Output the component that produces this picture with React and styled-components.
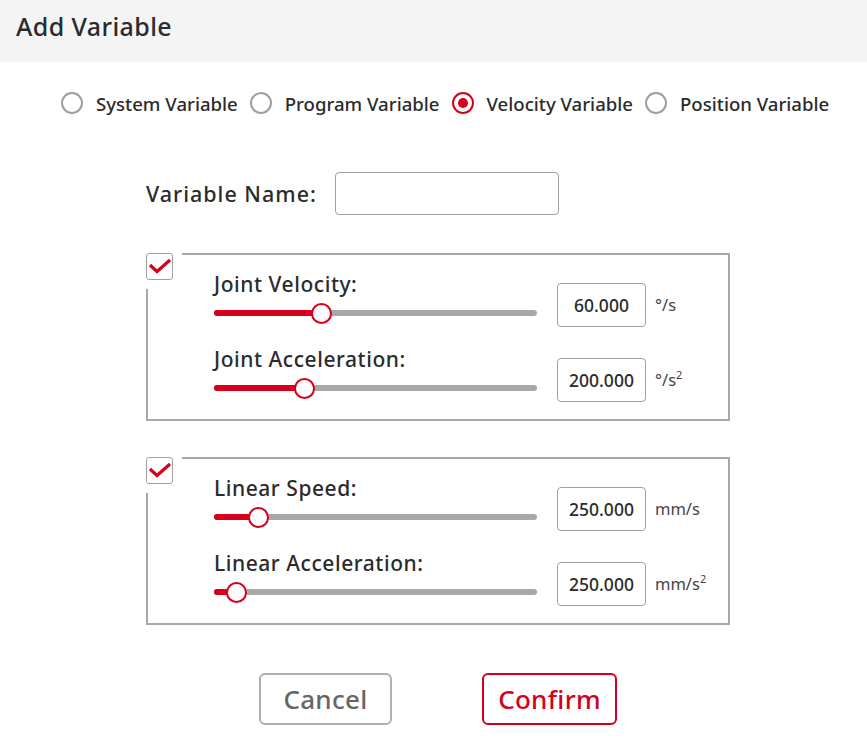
import React from "react";
import styled, { createGlobalStyle } from "styled-components";

const RED = "#d6001c";
const GRAY = "#a8a8a8";

const Global = createGlobalStyle`
  html, body { margin: 0; padding: 0; background: #fff; }
  body { font-family: "Noto Sans", "Open Sans", sans-serif; color: #2b2b2b; font-weight: 500; }
  * { box-sizing: border-box; }
`;

const Page = styled.div`
  width: 867px;
  height: 751px;
  background: #fff;
  overflow: hidden;
`;

const Header = styled.div`
  height: 62px;
  background: #f4f4f4;
  display: flex;
  align-items: flex-start;
  padding: 8px 0 0 16px;
  font-size: 25px;
  line-height: 36px;
  letter-spacing: 0.4px;
  color: #2b2b2b;
`;

const RadioRow = styled.div`
  display: flex;
  align-items: center;
  padding-left: 61px;
  margin-top: 29px;
  height: 24px;
`;

const RadioItem = styled.label`
  display: flex;
  align-items: center;
  gap: 13px;
  margin-right: 12px;
  font-size: 18.6px;
  letter-spacing: 0;
  color: #2b2b2b;
  white-space: nowrap;
`;

const RadioCircle = styled.span`
  width: 22px;
  height: 22px;
  border-radius: 50%;
  border: 2px solid ${(p) => (p.$on ? RED : "#9e9e9e")};
  display: flex;
  align-items: center;
  justify-content: center;
  flex: none;
  &::after {
    content: "";
    display: ${(p) => (p.$on ? "block" : "none")};
    width: 10px;
    height: 10px;
    border-radius: 50%;
    background: ${RED};
  }
`;

const Form = styled.div`
  padding-left: 146px;
  width: 730px;
`;

const NameRow = styled.div`
  display: flex;
  align-items: center;
  margin-top: 57px;
  height: 42px;
`;

const NameLabel = styled.span`
  font-size: 21.5px;
  letter-spacing: 1px;
  width: 189px;
  color: #2b2b2b;
`;

const NameInput = styled.div`
  width: 224px;
  height: 43px;
  border: 1.5px solid #a0a0a0;
  border-radius: 4px;
`;

const Group = styled.div`
  position: relative;
  border: 2px solid ${GRAY};
  margin-top: ${(p) => p.$mt}px;
  padding: 16px 0 21px 66px;
  display: flex;
  flex-direction: column;
  gap: 23px;
`;

const Check = styled.span`
  position: absolute;
  left: -2px;
  top: -2px;
  width: 27px;
  height: 27px;
  border: 1.5px solid #a0a0a0;
  border-radius: 3px;
  background: #fff;
  box-shadow: 0 0 0 9px #fff;
  display: flex;
  align-items: center;
  justify-content: center;
`;

const Row = styled.div`
  display: grid;
  grid-template-columns: 323px 88px auto;
  column-gap: 20px;
  align-items: end;
`;

const Left = styled.div`
  display: flex;
  flex-direction: column;
`;

const RowLabel = styled.span`
  font-size: 21px;
  letter-spacing: 0.55px;
  line-height: 26px;
  color: #2b2b2b;
`;

const Track = styled.div`
  position: relative;
  margin-top: 6px;
  height: 20px;
  display: flex;
  align-items: center;
  &::before {
    content: "";
    display: block;
    width: 100%;
    height: 6px;
    border-radius: 3px;
    background: ${GRAY};
  }
`;

const Fill = styled.span`
  position: absolute;
  left: 0;
  top: 7px;
  height: 6px;
  border-radius: 3px 0 0 3px;
  background: ${RED};
`;

const Thumb = styled.span`
  position: absolute;
  top: 0;
  width: 21px;
  height: 21px;
  margin-left: -10.5px;
  border-radius: 50%;
  background: #fff;
  border: 2px solid ${RED};
`;

const ValueBox = styled.div`
  width: 89px;
  height: 44px;
  margin-bottom: -4px;
  border: 1.5px solid #a0a0a0;
  border-radius: 4px;
  display: flex;
  align-items: center;
  justify-content: center;
  font-size: 17.5px;
  color: #2b2b2b;
`;

const Unit = styled.span`
  margin-left: -10px;
  align-self: end;
  margin-bottom: 6px;
  line-height: 24px;
  font-size: 16.5px;
  font-weight: 400;
  color: #444;
  sup { font-size: 11px; line-height: 0; vertical-align: 7px; }
`;

const Buttons = styled.div`
  display: flex;
  padding-left: 259px;
  gap: 90px;
  margin-top: 48px;
`;

const Button = styled.div`
  width: ${(p) => p.$w}px;
  height: 52px;
  border: 2px solid ${(p) => (p.$primary ? RED : "#b0b0b0")};
  border-radius: 6px;
  display: flex;
  align-items: center;
  justify-content: center;
  font-size: 26px;
  letter-spacing: 0.3px;
  color: ${(p) => (p.$primary ? RED : "#666")};
`;

const CheckMark = () => (
  <svg width="24" height="24" viewBox="0 0 24 24">
    <polyline points="2,10 9,16.5 22,5" fill="none" stroke={RED} strokeWidth="3.2" />
  </svg>
);

const Slider = ({ pct }) => (
  <Track>
    <Fill style={{ width: `${pct}%` }} />
    <Thumb style={{ left: `${pct}%` }} />
  </Track>
);

const ParamRow = ({ label, pct, value, unit, sq }) => (
  <Row>
    <Left>
      <RowLabel>{label}</RowLabel>
      <Slider pct={pct} />
    </Left>
    <ValueBox>{value}</ValueBox>
    <Unit>
      {unit}
      {sq && <sup>2</sup>}
    </Unit>
  </Row>
);

export default function App() {
  const radios = ["System Variable", "Program Variable", "Velocity Variable", "Position Variable"];
  return (
    <Page>
      <Global />
      <Header>Add Variable</Header>
      <RadioRow>
        {radios.map((r, i) => (
          <RadioItem key={r}>
            <RadioCircle $on={i === 2} />
            {r}
          </RadioItem>
        ))}
      </RadioRow>
      <Form>
        <NameRow>
          <NameLabel>Variable Name:</NameLabel>
          <NameInput />
        </NameRow>
        <Group $mt={39}>
          <Check>
            <CheckMark />
          </Check>
          <ParamRow label="Joint Velocity:" pct={33.4} value="60.000" unit="°/s" />
          <ParamRow label="Joint Acceleration:" pct={27.9} value="200.000" unit="°/s" sq />
        </Group>
        <Group $mt={36}>
          <Check>
            <CheckMark />
          </Check>
          <ParamRow label="Linear Speed:" pct={13.9} value="250.000" unit="mm/s" />
          <ParamRow label="Linear Acceleration:" pct={7.1} value="250.000" unit="mm/s" sq />
        </Group>
      </Form>
      <Buttons>
        <Button $w={133}>Cancel</Button>
        <Button $w={135} $primary>Confirm</Button>
      </Buttons>
    </Page>
  );
}
